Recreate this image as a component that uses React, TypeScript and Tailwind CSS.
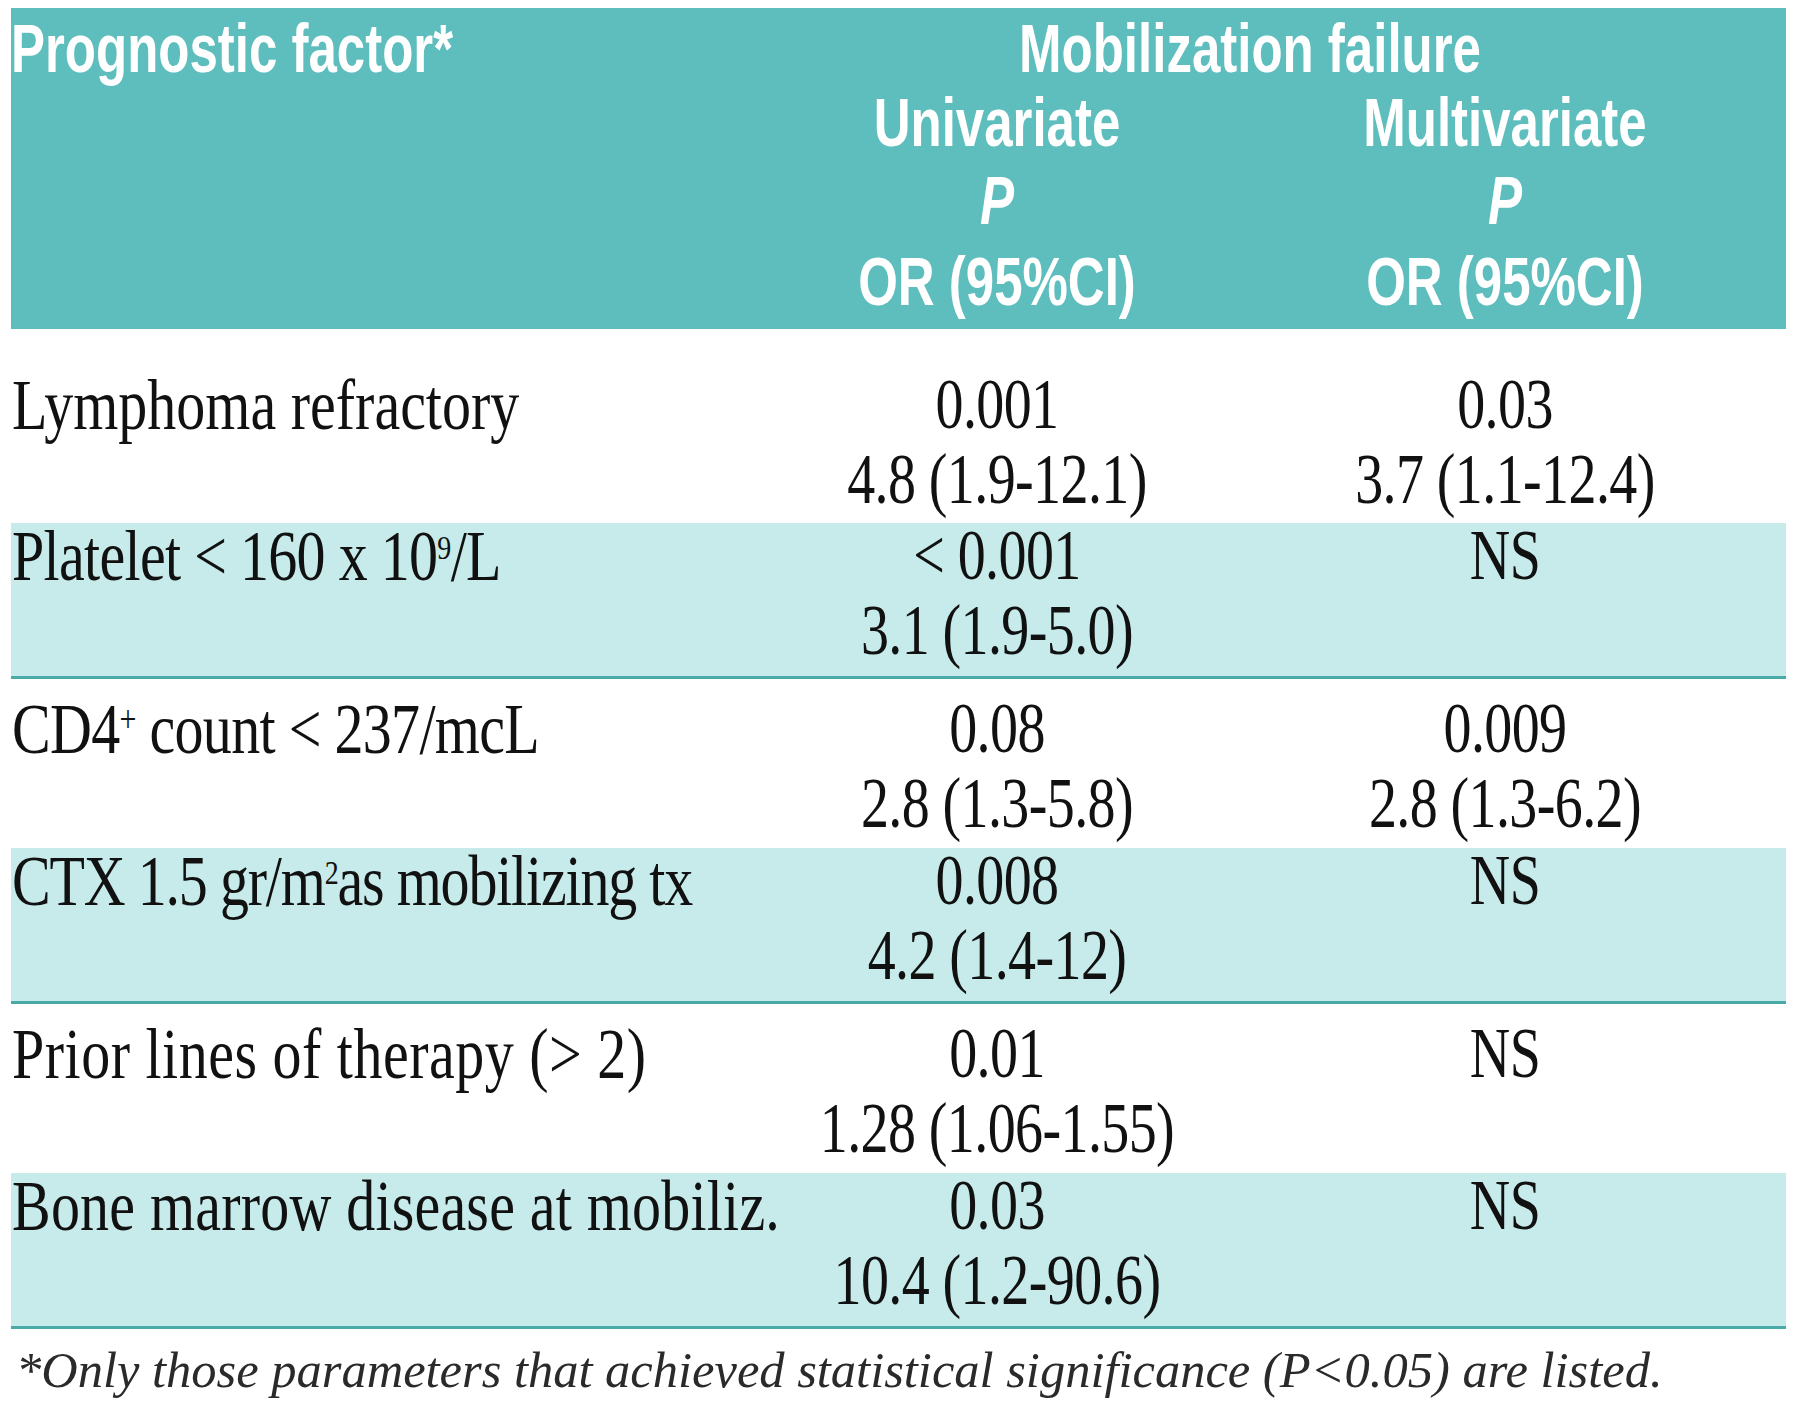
import React from "react";

type Row = {
  label: React.ReactNode;
  track: string;
  uni: string[];
  multi: string[];
  shaded: boolean;
  first?: boolean;
};

function LabelLine({ children, track }: { children?: React.ReactNode; track: string }) {
  return (
    <div
      className={
        "h-[75px] leading-[75px] text-[58px] whitespace-nowrap origin-[50%_57px] scale-y-[1.24] " + track
      }
    >
      {children}
    </div>
  );
}

function BodyLine({ children }: { children?: React.ReactNode }) {
  return (
    <div className="h-[75px] leading-[75px] text-[56px] tracking-[-0.6px] whitespace-nowrap origin-[50%_56px] scale-y-[1.28]">
      {children}
    </div>
  );
}

function HeadLine({ children, italic }: { children?: React.ReactNode; italic?: boolean }) {
  return (
    <div
      className={
        italic
          ? "leading-[74px] whitespace-nowrap origin-[50%_55px] scale-y-[1.36] italic"
          : "leading-[74px] whitespace-nowrap origin-[50%_55px] scale-y-[1.36]"
      }
    >
      {children}
    </div>
  );
}

const rows: Row[] = [
  {
    label: "Lymphoma refractory",
    track: "tracking-normal",
    uni: ["0.001", "4.8 (1.9-12.1)"],
    multi: ["0.03", "3.7 (1.1-12.4)"],
    shaded: false,
    first: true,
  },
  {
    label: (
      <>
        Platelet &lt; 160 x 10
        <sup className="text-[28px] top-[-17px]">9</sup>/L
      </>
    ),
    track: "tracking-[-0.7px]",
    uni: ["< 0.001", "3.1 (1.9-5.0)"],
    multi: ["NS"],
    shaded: true,
  },
  {
    label: (
      <>
        CD4<sup className="text-[30px] top-[-17px]">+</sup> count &lt; 237/mcL
      </>
    ),
    track: "tracking-[-0.7px]",
    uni: ["0.08", "2.8 (1.3-5.8)"],
    multi: ["0.009", "2.8 (1.3-6.2)"],
    shaded: false,
  },
  {
    label: (
      <>
        CTX 1.5 gr/m<sup className="text-[28px] top-[-17px]">2</sup>as mobilizing tx
      </>
    ),
    track: "tracking-[-1.2px]",
    uni: ["0.008", "4.2 (1.4-12)"],
    multi: ["NS"],
    shaded: true,
  },
  {
    label: "Prior lines of therapy (> 2)",
    track: "tracking-[0.5px]",
    uni: ["0.01", "1.28 (1.06-1.55)"],
    multi: ["NS"],
    shaded: false,
  },
  {
    label: "Bone marrow disease at mobiliz.",
    track: "tracking-[0.2px]",
    uni: ["0.03", "10.4 (1.2-90.6)"],
    multi: ["NS"],
    shaded: true,
  },
];

function rowClass(r: Row) {
  if (r.first) return "grid grid-cols-[703px_566px_506px] h-[194px] pt-[43px] bg-white";
  if (r.shaded)
    return "grid grid-cols-[703px_566px_506px] h-[156px] pt-0 bg-[#c7ebeb] border-b-[3px] border-[#4aaaa7]";
  return "grid grid-cols-[703px_566px_506px] h-[169px] pt-[17px] bg-white";
}

export default function App() {
  return (
    <div className="w-[1800px] h-[1418px] bg-white overflow-hidden">
      <div className="ml-[11px] mt-[8px] w-[1775px]">
        {/* Header */}
        <div className="grid grid-cols-[703px_566px_506px] grid-rows-[74px_78px_81px_78px] h-[321px] pt-[10px] bg-[#5ebdbd] text-white font-['Liberation_Sans',Arial,sans-serif] font-bold text-[51px]">
          <div className="pl-0">
            <HeadLine>Prognostic factor*</HeadLine>
          </div>
          <div className="col-span-2 text-center">
            <HeadLine>Mobilization failure</HeadLine>
          </div>

          <div />
          <div className="text-center">
            <HeadLine>Univariate</HeadLine>
          </div>
          <div className="text-center pr-[56px]">
            <HeadLine>Multivariate</HeadLine>
          </div>

          <div />
          <div className="text-center">
            <HeadLine italic>P</HeadLine>
          </div>
          <div className="text-center pr-[56px]">
            <HeadLine italic>P</HeadLine>
          </div>

          <div />
          <div className="text-center">
            <HeadLine>OR (95%CI)</HeadLine>
          </div>
          <div className="text-center pr-[56px]">
            <HeadLine>OR (95%CI)</HeadLine>
          </div>
        </div>

        {/* Body */}
        <div className="font-['Liberation_Serif','Times_New_Roman',serif] text-[#111111]">
          {rows.map((r, i) => (
            <div key={i} className={rowClass(r)}>
              <div className="pl-[1px]">
                <LabelLine track={r.track}>{r.label}</LabelLine>
              </div>
              <div className="text-center">
                {r.uni.map((t, j) => (
                  <BodyLine key={j}>{t}</BodyLine>
                ))}
              </div>
              <div className="text-center pr-[56px]">
                {r.multi.map((t, j) => (
                  <BodyLine key={j}>{t}</BodyLine>
                ))}
              </div>
            </div>
          ))}
        </div>

        {/* Footnote */}
        <div className="mt-[11px] ml-[5px] h-[60px] leading-[60px] whitespace-nowrap font-['Liberation_Serif','Times_New_Roman',serif] italic text-[50.5px] text-[#2a2a2a]">
          *Only those parameters that achieved statistical significance (P&lt;0.05) are listed.
        </div>
      </div>
    </div>
  );
}
